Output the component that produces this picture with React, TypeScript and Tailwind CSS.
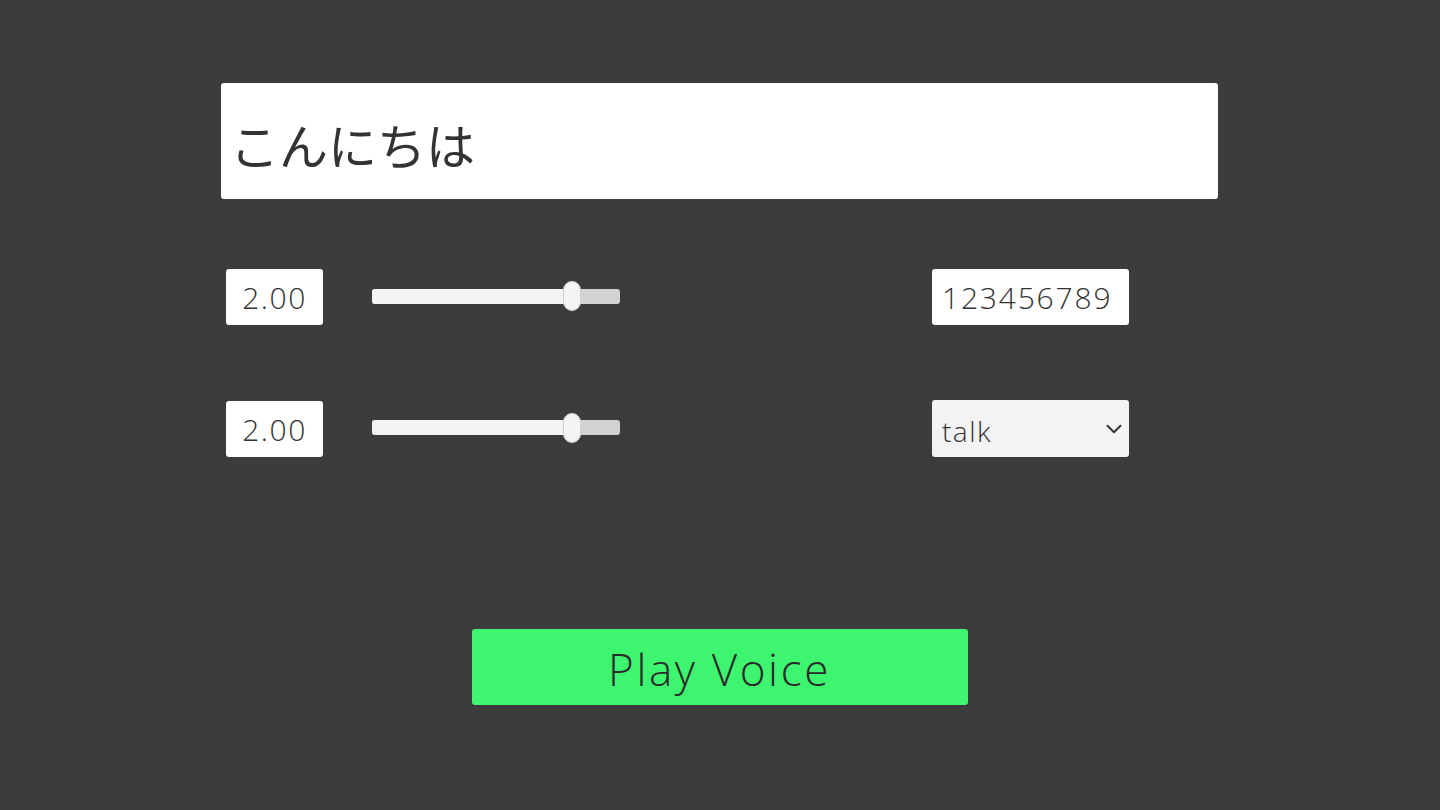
import { ChevronDown } from "lucide-react";

const font = { fontFamily: '"Open Sans", "Noto Sans CJK JP", sans-serif' };

function Slider({ value }: { value: number }) {
    return (
        <div className="relative w-[248px] h-[30px] flex items-center">
            <div className="w-full h-[15px] rounded-[3px] bg-[#d2d2d2] overflow-hidden">
                <div className="h-full bg-[#f4f4f4]" style={{ width: `${value * 100}%` }} />
            </div>
            <div
                className="absolute top-0 w-[18px] h-[30px] rounded-full bg-[#f4f4f4] border border-[#cfcfcf] -translate-x-1/2"
                style={{ left: `${value * 100}%` }}
            />
        </div>
    );
}

function NumberBox({ text }: { text: string }) {
    return (
        <div className="w-[97px] h-[56px] bg-white rounded-[3px] flex items-center justify-center text-[30px] font-light tracking-[1.5px] text-[#333] leading-none pt-[2px]">
            {text}
        </div>
    );
}

export default function App() {
    return (
        <div className="min-h-[810px] w-full bg-[#3c3c3c] overflow-hidden" style={font}>
            <div className="ml-[221px] w-[997px] pt-[83px]">
                <div
                    className="h-[116px] bg-white rounded-[3px] flex items-center pl-[9px] text-[49px] font-normal text-[#333] leading-none pt-[4px]"
                    style={{ fontFamily: '"Noto Sans CJK JP", sans-serif' }}
                >
                    こんにちは
                </div>

                <div className="mt-[70px] flex items-center pl-[5px]">
                    <NumberBox text="2.00" />
                    <div className="ml-[49px] -mt-[2px]">
                        <Slider value={0.807} />
                    </div>
                    <div className="ml-[312px] w-[197px] h-[56px] bg-white rounded-[3px] flex items-center pl-[10px] text-[30px] font-light tracking-[1.8px] text-[#333] leading-none pt-[2px]">
                        123456789
                    </div>
                </div>

                <div className="mt-[75px] flex items-center pl-[5px]">
                    <NumberBox text="2.00" />
                    <div className="ml-[49px] -mt-[2px]">
                        <Slider value={0.807} />
                    </div>
                    <div className="ml-[312px] w-[197px] h-[57px] bg-[#f3f3f3] rounded-[3px] flex items-center justify-between pl-[10px] pr-[2px] text-[28px] font-light tracking-[1.5px] text-[#333] leading-none">
                        <span className="pt-[4px]">talk</span>
                        <ChevronDown size={26} strokeWidth={1.8} className="text-[#333]" />
                    </div>
                </div>

                <div className="mt-[172px] mx-auto w-[496px] h-[76px] bg-[#3df56e] rounded-[3px] flex items-center justify-center text-[44px] font-light text-[#2a2a2a] tracking-[2.6px] leading-none pt-[4px]">
                    Play Voice
                </div>
            </div>
        </div>
    );
}
